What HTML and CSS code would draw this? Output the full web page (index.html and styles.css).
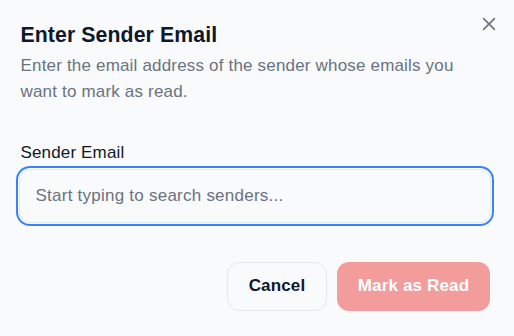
FILE: index.html
```html
<!DOCTYPE html>
<html lang="en">
<head>
<meta charset="utf-8">
<link rel="stylesheet" href="styles.css">
</head>
<body>
<div class="dialog">
  <button class="close" aria-label="Close">
    <svg width="16" height="16" viewBox="0 0 16 16" fill="none" stroke="currentColor" stroke-width="1.6" stroke-linecap="round"><path d="M2.6 2.6l10.8 10.8M13.4 2.6L2.6 13.4"/></svg>
  </button>
  <h2 class="title">Enter Sender Email</h2>
  <p class="desc">Enter the email address of the sender whose emails you want to mark as read.</p>
  <div class="field">
    <label class="label" for="sender">Sender Email</label>
    <input id="sender" class="input" type="text" placeholder="Start typing to search senders...">
  </div>
  <div class="actions">
    <button class="btn btn-cancel">Cancel</button>
    <button class="btn btn-primary">Mark as Read</button>
  </div>
</div>
</body>
</html>
```
FILE: styles.css
```css
html, body {
  margin: 0;
  padding: 0;
  background: #f8fafc;
}
body {
  font-family: "Liberation Sans", Arial, sans-serif;
  color: #0f172a;
}
.dialog {
  position: relative;
  width: 514px;
  height: 336px;
  box-sizing: border-box;
  padding: 20.5px 23px 0 18.5px;
  display: flex;
  flex-direction: column;
}
.close {
  position: absolute;
  top: 16px;
  right: 17px;
  width: 16px;
  height: 16px;
  padding: 0;
  border: 0;
  background: none;
  color: #6b7280;
  display: flex;
}
.title {
  margin: 0 0 0 2px;
  font-size: 21.25px;
  line-height: 29.75px;
  font-weight: 700;
  letter-spacing: 0.1px;
  color: #0f172a;
}
.desc {
  margin: 2.75px 0 0 2px;
  font-size: 17px;
  line-height: 25.5px;
  letter-spacing: 0.18px;
  color: #6b7280;
}
.field {
  margin-top: 36.4px;
  display: flex;
  flex-direction: column;
  gap: 3.6px;
}
.label {
  margin-left: 2px;
  font-size: 17px;
  line-height: 25.5px;
  letter-spacing: 0.15px;
  color: #0f172a;
}
.input {
  box-sizing: border-box;
  height: 54px;
  width: 100%;
  padding: 0 16px;
  border: 1px solid #e2e8f0;
  border-radius: 11px;
  background: #f8fafc;
  font-family: inherit;
  font-size: 17px;
  letter-spacing: 0.24px;
  color: #0f172a;
  outline: none;
  box-shadow: 0 0 0 1px #f8fafc, 0 0 0 3px #3b82f6;
}
.input::placeholder {
  color: #6b7280;
}
.actions {
  margin-top: 38.5px;
  display: flex;
  justify-content: flex-end;
  gap: 10px;
  padding-right: 1px;
}
.btn {
  height: 49px;
  border-radius: 12px;
  font-family: inherit;
  font-size: 17px;
  font-weight: 700;
  letter-spacing: 0.15px;
  padding: 0;
  box-sizing: border-box;
}
.btn-cancel {
  width: 100px;
  background: #f8fafc;
  border: 1px solid #e5e7eb;
  color: #0f172a;
}
.btn-primary {
  width: 153px;
  background: #f29c9c;
  border: 0;
  color: #ffffff;
}
```
